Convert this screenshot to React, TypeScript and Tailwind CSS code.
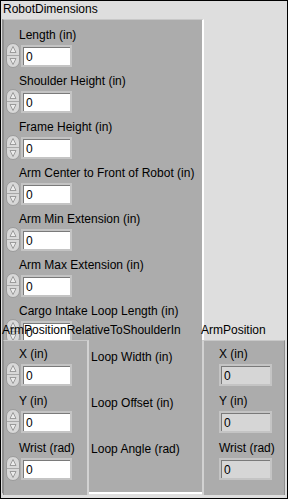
import React from 'react';

const Spinner = () => (
  <svg width="14" height="25" viewBox="0 0 14 25" className="shrink-0">
    <rect x="0.5" y="0.5" width="13" height="24" rx="6.5" fill="#d8d8d8" stroke="#9a9a9a" />
    <line x1="1" y1="12.5" x2="13" y2="12.5" stroke="#a8a8a8" />
    <path d="M7 3.5 L10 9.5 L4 9.5 Z" fill="#ececec" stroke="#8a8a8a" strokeWidth="0.8" />
    <path d="M7 21.5 L10 15.5 L4 15.5 Z" fill="#ececec" stroke="#8a8a8a" strokeWidth="0.8" />
  </svg>
);

const NumericControl = ({ label }: { label: string }) => (
  <div className="flex flex-col">
    <div className="h-[15px] leading-[15px] pl-[15px] whitespace-nowrap">{label}</div>
    <div className="flex items-center h-[25px] pl-[2px] gap-[1px]">
      <Spinner />
      <div className="w-[51px] h-[22px] border border-[#c4c4c4] bg-[#c4c4c4] p-[1px]">
        <div className="w-full h-full bg-white border-t border-l border-[#7a7a7a] pl-[2px] leading-[18px]">0</div>
      </div>
    </div>
  </div>
);

const Indicator = ({ label }: { label: string }) => (
  <div className="flex flex-col">
    <div className="h-[15px] leading-[15px] pl-[15px] whitespace-nowrap">{label}</div>
    <div className="flex items-center h-[25px] pl-[15px]">
      <div className="w-[53px] h-[22px] border border-[#c4c4c4] bg-[#c4c4c4] p-[1px]">
        <div className="w-full h-full bg-[#d6d6d6] border-t border-l border-[#7a7a7a] pl-[2px] leading-[18px]">0</div>
      </div>
    </div>
  </div>
);

const dims = [
  'Length (in)',
  'Shoulder Height (in)',
  'Frame Height (in)',
  'Arm Center to Front of Robot (in)',
  'Arm Min Extension (in)',
  'Arm Max Extension (in)',
  'Cargo Intake Loop Length (in)',
  'Cargo Intake Loop Width (in)',
  'Cargo Intake Loop Offset (in)',
  'Cargo Intake Loop Angle (rad)',
];

const pos = ['X (in)', 'Y (in)', 'Wrist (rad)'];

export default function App() {
  return (
    <div className="relative w-[288px] h-[499px] bg-[#dedede] border border-black overflow-hidden text-[12px] text-black font-['Liberation_Sans',Arial,sans-serif]">
      <div className="h-[18px] leading-[16px] pl-[2px]">RobotDimensions</div>
      <div className="w-[202px] h-[475px] ml-[1px] bg-[#acacac] border-t border-t-[#c8c8c8] border-l-2 border-l-[#8e8e8e] border-r-2 border-r-white border-b-2 border-b-white">
        <div className="flex flex-col gap-[6px] pt-[8px]">
          {dims.map((d) => (
            <NumericControl key={d} label={d} />
          ))}
        </div>
      </div>

      {/* ArmPositionRelativeToShoulderIn cluster, lying over the dims cluster */}
      <div className="absolute left-[1px] top-[321px] leading-[16px] whitespace-nowrap">ArmPositionRelativeToShoulderIn</div>
      <div className="absolute left-[2px] top-[339px] w-[86px] h-[155px] bg-[#acacac] border-t border-t-[#c8c8c8] border-l border-l-[#8e8e8e] border-r-2 border-r-[#d2d2d2]">
        <div className="flex flex-col gap-[7px] pt-[6px]">
          {pos.map((p) => (
            <NumericControl key={p} label={p} />
          ))}
        </div>
      </div>

      {/* ArmPosition indicator cluster */}
      <div className="absolute left-[200px] top-[321px] leading-[16px] whitespace-nowrap">ArmPosition</div>
      <div className="absolute left-[201px] top-[339px] w-[83px] h-[155px] bg-[#acacac] border-t border-t-[#c8c8c8] border-l-2 border-l-[#d2d2d2] border-r border-r-[#8e8e8e]">
        <div className="flex flex-col gap-[7px] pt-[6px]">
          {pos.map((p) => (
            <Indicator key={p} label={p} />
          ))}
        </div>
      </div>
    </div>
  );
}
